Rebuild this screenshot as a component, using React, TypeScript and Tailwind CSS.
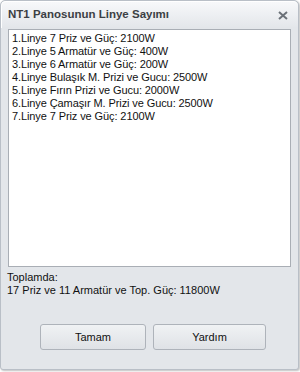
import React from 'react';

const lines = [
  '1.Linye 7 Priz ve Güç: 2100W',
  '2.Linye 5 Armatür ve Güç: 400W',
  '3.Linye 6 Armatür ve Güç: 200W',
  '4.Linye Bulaşık M. Prizi ve Gucu: 2500W',
  '5.Linye Fırın Prizi ve Gucu: 2000W',
  '6.Linye Çamaşır M. Prizi ve Gucu: 2500W',
  '7.Linye 7 Priz ve Güç: 2100W',
];

export default function App() {
  return (
    <div className="w-[300px] h-[372px] bg-white font-['Liberation_Sans',sans-serif] text-[11px] text-[#111]">
      <div className="w-[299px] h-[370px] flex flex-col rounded-t-[5px] rounded-b-[3px] border border-[#b9bfc7] bg-[#e3e6ea] shadow-[1px_1px_2px_rgba(0,0,0,0.25)]">
        {/* title bar */}
        <div className="h-[27px] shrink-0 flex items-center justify-between pl-[6px] pr-[10px] rounded-t-[5px] border-t border-l border-white bg-gradient-to-b from-[#f7f8fa] to-[#e3e6ea]">
          <span className="font-bold text-[11.5px] text-[#3c3f44]">NT1 Panosunun Linye Sayımı</span>
          <svg width="10" height="9" viewBox="0 0 10 9" className="mt-[1px]">
            <path d="M1 1 L9 8 M9 1 L1 8" stroke="#6b7178" strokeWidth="2" />
          </svg>
        </div>

        {/* list */}
        <div className="mx-[7px] mt-[1px] h-[238px] shrink-0 border border-[#a9aeb5] bg-white px-[3px] pt-[2px] leading-[13px] tracking-[-0.1px]">
          {lines.map((l) => (
            <div key={l} className="whitespace-nowrap">{l}</div>
          ))}
        </div>

        <div className="px-[6px] pt-[4px] leading-[13px]">
          <div>Toplamda:</div>
          <div>17 Priz ve 11 Armatür ve Top. Güç: 11800W</div>
        </div>

        <div className="flex gap-[7px] pl-[39px] mt-[27px]">
          <button className="w-[106px] h-[26px] rounded-[3px] border border-[#aeb3ba] bg-gradient-to-b from-[#f0f2f4] to-[#dfe2e6] text-[11px] text-[#111]">
            Tamam
          </button>
          <button className="w-[113px] h-[26px] rounded-[3px] border border-[#aeb3ba] bg-gradient-to-b from-[#f0f2f4] to-[#dfe2e6] text-[11px] text-[#111]">
            Yardım
          </button>
        </div>
      </div>
    </div>
  );
}
